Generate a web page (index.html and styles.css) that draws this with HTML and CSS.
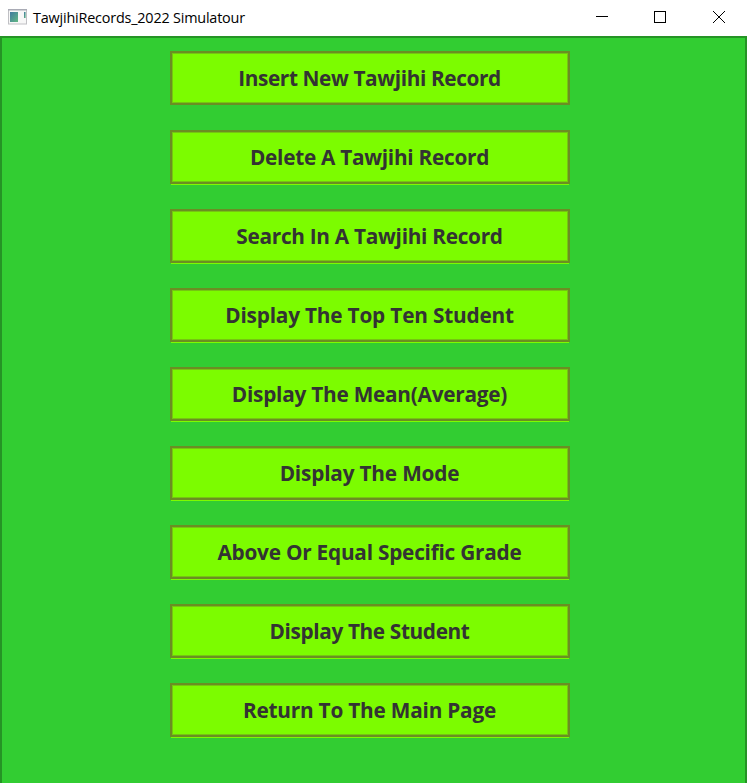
FILE: index.html
```html
<!DOCTYPE html>
<html lang="en">
<head>
<meta charset="utf-8">
<title>TawjihiRecords_2022 Simulatour</title>
<link rel="stylesheet" href="styles.css">
</head>
<body>
<div class="window">
<header class="titlebar">
<svg class="app-icon" width="19" height="16" viewBox="0 0 19 16">
<defs><linearGradient id="pane" x1="0" y1="0" x2="1" y2="1"><stop offset="0" stop-color="#4079a0"/><stop offset="1" stop-color="#62b883"/></linearGradient></defs>
<rect x="0.5" y="0.5" width="18" height="14.5" fill="#f7f7f7" stroke="#c0c0c4"/>
<rect x="0" y="0" width="19" height="1.5" fill="#a9abb5"/>
<rect x="2" y="3" width="8" height="10" fill="url(#pane)"/>
<rect x="16" y="3" width="1.6" height="6" fill="url(#pane)"/>
</svg>
<span class="title">TawjihiRecords_2022 Simulatour</span>
<svg class="controls" width="130" height="13" viewBox="0 0 130 13" fill="none" stroke="#000" stroke-width="1">
<path d="M0 5.5h12M58.5 .5h11v11h-11z" shape-rendering="crispEdges"/>
<path d="M117 0l12 12M129 0l-12 12"/>
</svg>
</header>
<main class="menu">
<button><span class="insert">Insert New Tawjihi Record</span></button>
<button><span class="delete">Delete A Tawjihi Record</span></button>
<button><span class="search">Search In A Tawjihi Record</span></button>
<button><span class="top-ten">Display The Top Ten Student</span></button>
<button><span class="mean">Display The Mean(Average)</span></button>
<button><span class="mode">Display The Mode</span></button>
<button><span class="grade">Above Or Equal Specific Grade</span></button>
<button><span class="student">Display The Student</span></button>
<button><span class="return">Return To The Main Page</span></button>
</main>
</div>
</body>
</html>
```
FILE: styles.css
```css
* { box-sizing: border-box; }
body { margin: 0; background: #fff; overflow: hidden; }
.window { width: 747px; height: 783px; display: flex; flex-direction: column; }
.titlebar { height: 36px; flex: none; display: flex; align-items: flex-start; padding: 9px 0 0 8px; }
.app-icon { flex: none; }
.title { font: 14.4px/18px "Open Sans", "Noto Sans", sans-serif; margin-left: 6px; white-space: nowrap; letter-spacing: -0.19px; color: #000; }
.controls { margin: 2px 21px 0 auto; }
.menu { flex: 1; background: #32cd32; border: 2px solid #259425; border-bottom: 0; padding: 13px 0 0 168px; display: flex; flex-direction: column; gap: 25px; }
button { width: 400px; height: 54px; flex: none; padding: 0 1px 0 0; background: #7cfc00; border: 2px solid #6b8e23; border-radius: 0; box-shadow: inset 0 0 0 1px #76c511; display: flex; align-items: center; justify-content: center; color: #333; font: bold 20.8px/28px "Open Sans", "Noto Sans", sans-serif; }
button + button { box-shadow: inset 0 0 0 1px #76c511, 0 2px 0 -1px #7cfc00; }
button span { white-space: nowrap; }
.insert { letter-spacing: -0.38px; }
.delete { letter-spacing: -0.28px; }
.search { letter-spacing: -0.29px; }
.top-ten { letter-spacing: -0.2px; }
.mean { letter-spacing: -0.25px; }
.mode { letter-spacing: -0.19px; }
.grade { letter-spacing: -0.24px; }
.student { letter-spacing: -0.37px; }
.return { letter-spacing: -0.22px; }
```
